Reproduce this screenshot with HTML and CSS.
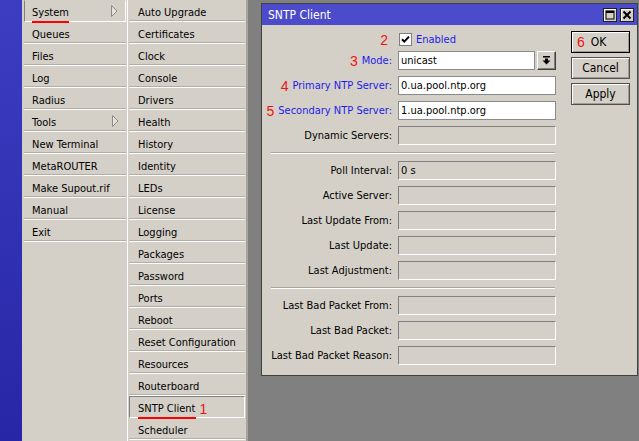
FILE: index.html
```html
<!DOCTYPE html>
<html lang="en">
<head>
    <meta charset="UTF-8">
    <meta name="viewport" content="width=device-width, initial-scale=1.0">
    <title>SNTP Client</title>
    <link rel="stylesheet" href="styles.css">
</head>
<body>
    <div class="screen">
        <div class="side-strip"></div>

        <ul class="menu menu-main">
            <li class="menu-item active"><div><span class="mark">System</span><svg class="sub-arrow" width="7" height="12" viewBox="0 0 7 12"><polygon points="0.5,0.5 6,6 0.5,11.5" fill="#e4e2dc" stroke="#8c8c8c"/></svg></div></li>
            <li class="menu-item"><div>Queues</div></li>
            <li class="menu-item"><div>Files</div></li>
            <li class="menu-item"><div>Log</div></li>
            <li class="menu-item"><div>Radius</div></li>
            <li class="menu-item"><div>Tools<svg class="sub-arrow" width="7" height="12" viewBox="0 0 7 12"><polygon points="0.5,0.5 6,6 0.5,11.5" fill="#e4e2dc" stroke="#8c8c8c"/></svg></div></li>
            <li class="menu-item"><div>New Terminal</div></li>
            <li class="menu-item"><div>MetaROUTER</div></li>
            <li class="menu-item"><div>Make Supout.rif</div></li>
            <li class="menu-item"><div>Manual</div></li>
            <li class="menu-item"><div>Exit</div></li>
        </ul>

        <ul class="menu menu-sub">
            <li class="menu-item"><div>Auto Upgrade</div></li>
            <li class="menu-item"><div>Certificates</div></li>
            <li class="menu-item"><div>Clock</div></li>
            <li class="menu-item"><div>Console</div></li>
            <li class="menu-item"><div>Drivers</div></li>
            <li class="menu-item"><div>Health</div></li>
            <li class="menu-item"><div>History</div></li>
            <li class="menu-item"><div>Identity</div></li>
            <li class="menu-item"><div>LEDs</div></li>
            <li class="menu-item"><div>License</div></li>
            <li class="menu-item"><div>Logging</div></li>
            <li class="menu-item"><div>Packages</div></li>
            <li class="menu-item"><div>Password</div></li>
            <li class="menu-item"><div>Ports</div></li>
            <li class="menu-item"><div>Reboot</div></li>
            <li class="menu-item"><div>Reset Configuration</div></li>
            <li class="menu-item"><div>Resources</div></li>
            <li class="menu-item"><div>Routerboard</div></li>
            <li class="menu-item active"><div><span class="mark">SNTP Client</span><span class="step">1</span></div></li>
            <li class="menu-item"><div>Scheduler</div></li>
        </ul>

        <div class="desktop">
            <div class="window">
                <div class="titlebar">
                    <span class="title">SNTP Client</span>
                    <div class="title-buttons">
                        <div class="title-button">
                            <svg width="10" height="10" viewBox="0 0 10 10"><rect x="1" y="1" width="8" height="8" fill="none" stroke="#000"/><rect x="1" y="1" width="8" height="2" fill="#000"/></svg>
                        </div>
                        <div class="title-button">
                            <svg width="10" height="10" viewBox="0 0 10 10"><path d="M1.5 1.5 L8.5 8.5 M8.5 1.5 L1.5 8.5" stroke="#000" stroke-width="2"/></svg>
                        </div>
                    </div>
                </div>

                <div class="window-body">
                    <div class="form">
                        <div class="form-row row-check">
                            <label class="form-label"><span class="step">2</span></label>
                            <span class="checkbox">
                                <svg width="11" height="11" viewBox="0 0 11 11"><path d="M2 5.2 L4.3 7.6 L9 2.6" fill="none" stroke="#000" stroke-width="2"/></svg>
                            </span>
                            <span class="check-text">Enabled</span>
                        </div>
                        <div class="form-row">
                            <label class="form-label blue"><span class="step">3</span>Mode:</label>
                            <span class="field field-edit field-select">unicast</span>
                            <span class="drop-button">
                                <svg width="9" height="9" viewBox="0 0 9 9"><rect x="1" y="0" width="7" height="1.5" fill="#000"/><path d="M3 2.5 H6 V4.5 H8.5 L4.5 8.5 L0.5 4.5 H3 Z" fill="#000"/></svg>
                            </span>
                        </div>
                        <div class="form-row">
                            <label class="form-label blue"><span class="step">4</span>Primary NTP Server:</label>
                            <span class="field field-edit">0.ua.pool.ntp.org</span>
                        </div>
                        <div class="form-row">
                            <label class="form-label blue"><span class="step">5</span>Secondary NTP Server:</label>
                            <span class="field field-edit">1.ua.pool.ntp.org</span>
                        </div>
                        <div class="form-row">
                            <label class="form-label">Dynamic Servers:</label>
                            <span class="field"></span>
                        </div>
                        <div class="form-sep"></div>
                        <div class="form-row">
                            <label class="form-label">Poll Interval:</label>
                            <span class="field">0 s</span>
                        </div>
                        <div class="form-row">
                            <label class="form-label">Active Server:</label>
                            <span class="field"></span>
                        </div>
                        <div class="form-row">
                            <label class="form-label">Last Update From:</label>
                            <span class="field"></span>
                        </div>
                        <div class="form-row">
                            <label class="form-label">Last Update:</label>
                            <span class="field"></span>
                        </div>
                        <div class="form-row">
                            <label class="form-label">Last Adjustment:</label>
                            <span class="field"></span>
                        </div>
                        <div class="form-sep"></div>
                        <div class="form-row">
                            <label class="form-label">Last Bad Packet From:</label>
                            <span class="field"></span>
                        </div>
                        <div class="form-row">
                            <label class="form-label">Last Bad Packet:</label>
                            <span class="field"></span>
                        </div>
                        <div class="form-row">
                            <label class="form-label">Last Bad Packet Reason:</label>
                            <span class="field"></span>
                        </div>
                    </div>

                    <div class="actions">
                        <button class="btn btn-default"><span class="step">6</span>OK</button>
                        <button class="btn">Cancel</button>
                        <button class="btn">Apply</button>
                    </div>
                </div>
            </div>
        </div>
    </div>
</body>
</html>
```

FILE: styles.css
```css
body {
    margin: 0;
    font-family: "DejaVu Sans Condensed", "Liberation Sans", sans-serif;
    font-size: 11px;
    color: #000000;
    background: #808080;
    overflow: hidden;
}
.screen {
    display: flex;
    width: 639px;
    height: 441px;
}
.side-strip {
    width: 22px;
    flex-shrink: 0;
    background: linear-gradient(to bottom, #3d3dc2, #2626a6);
}

/* menus */
.menu {
    list-style: none;
    margin: 0;
    padding: 0;
    background: #d4d0c8;
    box-sizing: border-box;
    flex-shrink: 0;
}
.menu-main {
    width: 105px;
}
.menu-sub {
    width: 121px;
    border-left: 1px solid #ffffff;
    border-right: 2px solid #a8a49c;
}
.menu-item {
    height: 22px;
    padding: 0 1px 0 2px;
    box-sizing: border-box;
}
.menu-item > div {
    height: 100%;
    box-sizing: border-box;
    display: flex;
    align-items: center;
    padding: 4px 0 0 8px;
    border-bottom: 1px solid #ffffff;
    box-shadow: inset 0 -1px 0 #b2aea6;
    white-space: nowrap;
}
.menu-item.active > div {
    padding: 3px 0 0 7px;
    border: 1px solid;
    border-color: #808080 #ffffff #ffffff #808080;
    box-shadow: none;
}
.menu-main .menu-item.active > div {
    border-top-color: transparent;
}
.menu-sub .menu-item {
    padding: 0 1px 0 1px;
}
.menu-sub .menu-item > div {
    padding-left: 9px;
}
.menu-sub .menu-item.active > div {
    padding-left: 8px;
}
.sub-arrow {
    margin: -4px 7px 0 auto;
}
.mark {
    border-bottom: 2px solid #ff0000;
    padding-bottom: 1px;
    margin-bottom: -4px;
    line-height: 14px;
}
.step {
    font-family: "Liberation Sans", Arial, sans-serif;
    font-size: 14px;
    color: #f01010;
    margin-right: 4px;
}
.menu-item .step {
    margin-left: 4px;
    margin-right: 0;
}

/* desktop + window */
.desktop {
    flex: 1;
    padding: 3px 0 0 13px;
}
.window {
    width: 377px;
    height: 373px;
    box-sizing: border-box;
    border: 1px solid #404040;
    background: #d4d0c8;
}
.titlebar {
    height: 21px;
    background: #4b4bcb;
    color: #ffffff;
    display: flex;
    align-items: center;
    padding: 0 3px 0 6px;
}
.title {
    font-size: 12px;
    flex-grow: 1;
}
.title-buttons {
    display: flex;
    gap: 3px;
}
.title-button {
    width: 14px;
    height: 14px;
    box-sizing: border-box;
    background: #d4d0c8;
    border: 1px solid #202020;
    box-shadow: inset 1px 1px 0 #ffffff;
    display: flex;
    align-items: center;
    justify-content: center;
}
.window-body {
    display: flex;
}

/* form */
.form {
    display: flex;
    flex-direction: column;
    gap: 6px;
    padding-top: 8px;
}
.form-row {
    display: flex;
    align-items: center;
    height: 19px;
}
.row-check {
    height: 13px;
    margin-bottom: -1px;
}
.form-label {
    width: 136px;
    flex-shrink: 0;
    display: flex;
    justify-content: flex-end;
    align-items: center;
    padding-right: 6px;
    box-sizing: border-box;
    white-space: nowrap;
}
.blue {
    color: #1c1ce8;
}
.checkbox {
    width: 13px;
    height: 13px;
    box-sizing: border-box;
    margin-left: 1px;
    border: 1px solid #808080;
    background: #ffffff;
    display: flex;
}
.check-text {
    color: #1c1ce8;
    margin-left: 4px;
}
.field {
    width: 158px;
    height: 19px;
    box-sizing: border-box;
    border: 1px solid;
    border-color: #808080 #ffffff #ffffff #808080;
    padding-left: 2px;
    display: flex;
    align-items: center;
    white-space: nowrap;
}
.field-edit {
    background: #ffffff;
    border-color: #8a8a8a;
}
.field-select {
    width: 137px;
}
.drop-button {
    width: 19px;
    height: 19px;
    box-sizing: border-box;
    margin-left: 2px;
    border: 1px solid;
    border-color: #ffffff #404040 #404040 #ffffff;
    box-shadow: inset -1px -1px 0 #808080;
    display: flex;
    align-items: center;
    justify-content: center;
}
.form-sep {
    margin: 1px 0 1px 9px;
    width: 284px;
    border-top: 1px solid #aaa69e;
    border-bottom: 1px solid #ffffff;
}

/* buttons */
.actions {
    display: flex;
    flex-direction: column;
    gap: 4px;
    padding-top: 6px;
    margin-left: 15px;
}
.btn {
    width: 59px;
    height: 22px;
    box-sizing: border-box;
    font-family: inherit;
    font-size: 12px;
    color: #000000;
    background: #d4d0c8;
    border: 1px solid #505050;
    box-shadow: inset 1px 1px 0 #ffffff, inset -1px -1px 0 #a09c94;
    padding: 0;
    display: flex;
    align-items: center;
    justify-content: center;
}
.btn-default {
    border-color: #000000;
    justify-content: flex-start;
    padding-left: 5px;
}
.btn-default .step {
    margin-right: 6px;
}
```
